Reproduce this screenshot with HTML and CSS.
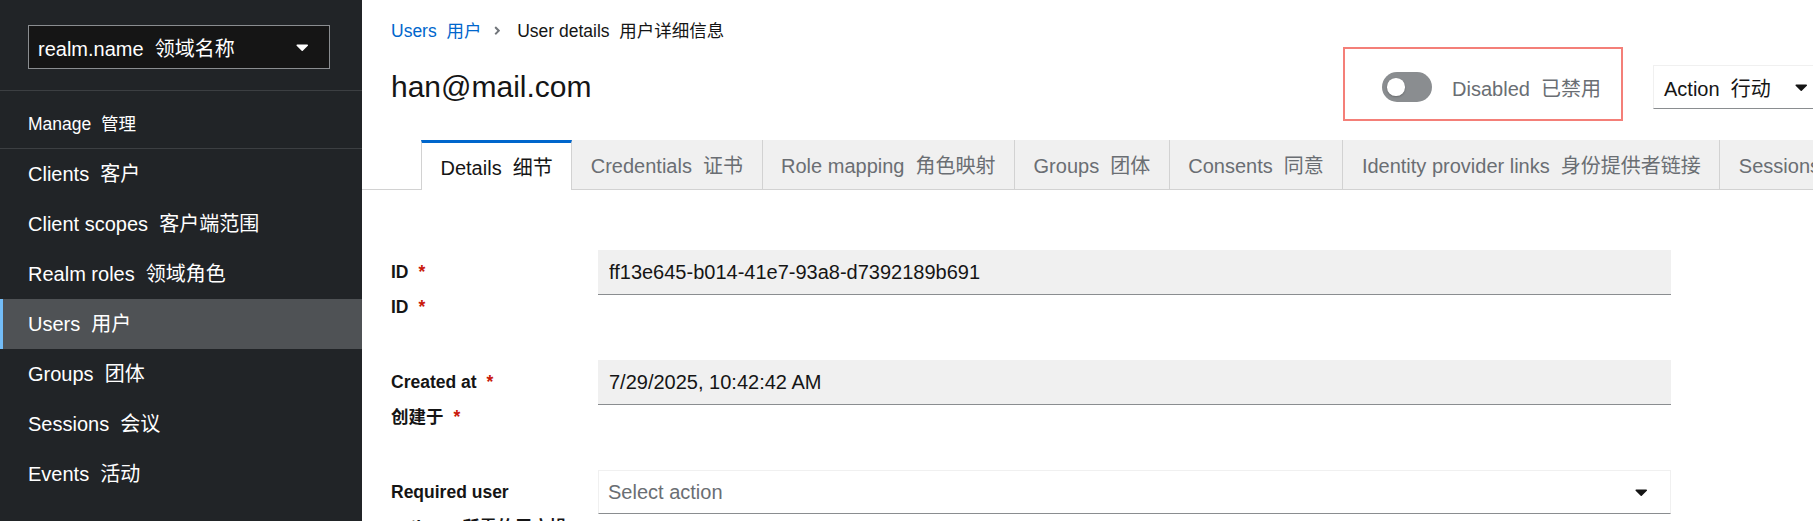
FILE: index.html
```html
<!DOCTYPE html>
<html lang="en">
<head>
<meta charset="utf-8">
<title>han@mail.com</title>
<link rel="stylesheet" href="styles.css">
</head>
<body>
<div class="page">
  <aside class="sidebar">
    <div class="realm-wrap">
      <div class="realm-select">
        <span>realm.name&nbsp; 领域名称</span>
        <svg class="caret" viewBox="0 0 320 512"><path d="M31.3 192h257.3c17.8 0 26.7 21.5 14.1 34.1L174.1 354.8c-7.8 7.8-20.5 7.8-28.3 0L17.2 226.1C4.6 213.5 13.5 192 31.3 192z"/></svg>
      </div>
    </div>
    <div class="nav-title">Manage&nbsp; 管理</div>
    <nav class="nav-list">
      <a class="nav-item">Clients&nbsp; 客户</a>
      <a class="nav-item">Client scopes&nbsp; 客户端范围</a>
      <a class="nav-item">Realm roles&nbsp; 领域角色</a>
      <a class="nav-item active">Users&nbsp; 用户</a>
      <a class="nav-item">Groups&nbsp; 团体</a>
      <a class="nav-item">Sessions&nbsp; 会议</a>
      <a class="nav-item">Events&nbsp; 活动</a>
    </nav>
  </aside>

  <main class="main">
    <header class="page-header">
      <nav class="breadcrumb">
        <a class="bc-link">Users&nbsp; 用户</a>
        <svg class="bc-divider" viewBox="0 0 256 512"><path d="M224.3 273l-136 136c-9.4 9.4-24.6 9.4-33.9 0l-22.6-22.6c-9.4-9.4-9.4-24.6 0-33.9l96.4-96.4-96.4-96.4c-9.4-9.4-9.4-24.6 0-33.9L54.3 103c9.4-9.4 24.6-9.4 33.9 0l136 136c9.5 9.4 9.5 24.6.1 34z"/></svg>
        <span class="bc-current">User details&nbsp; 用户详细信息</span>
      </nav>
      <div class="title-row">
        <h1 class="title">han@mail.com</h1>
        <div class="controls">
          <label class="switch">
            <span class="switch-track"></span>
            <span class="switch-label">Disabled&nbsp; 已禁用</span>
          </label>
          <div class="dropdown">
            <span>Action&nbsp; 行动</span>
            <svg class="caret" viewBox="0 0 320 512"><path d="M31.3 192h257.3c17.8 0 26.7 21.5 14.1 34.1L174.1 354.8c-7.8 7.8-20.5 7.8-28.3 0L17.2 226.1C4.6 213.5 13.5 192 31.3 192z"/></svg>
          </div>
        </div>
      </div>
    </header>

    <div class="tabs">
      <div class="tab active">Details&nbsp; 细节</div>
      <div class="tab">Credentials&nbsp; 证书</div>
      <div class="tab">Role mapping&nbsp; 角色映射</div>
      <div class="tab">Groups&nbsp; 团体</div>
      <div class="tab">Consents&nbsp; 同意</div>
      <div class="tab">Identity provider links&nbsp; 身份提供者链接</div>
      <div class="tab">Sessions&nbsp; 会议</div>
    </div>

    <section class="form-section">
      <form class="form">
        <div class="form-label">
          <span class="label-line">ID <span class="req">*</span></span>
          <span class="label-line">ID <span class="req">*</span></span>
        </div>
        <div class="form-control">
          <input class="text-input" readonly value="ff13e645-b014-41e7-93a8-d7392189b691">
        </div>

        <div class="form-label">
          <span class="label-line">Created at <span class="req">*</span></span>
          <span class="label-line">创建于 <span class="req">*</span></span>
        </div>
        <div class="form-control">
          <input class="text-input" readonly value="7/29/2025, 10:42:42 AM">
        </div>

        <div class="form-label">
          <span class="label-line">Required user actions&nbsp; 所需的用户操作</span>
        </div>
        <div class="form-control">
          <div class="select-toggle">
            <span>Select action</span>
            <svg class="caret dark" viewBox="0 0 320 512"><path d="M31.3 192h257.3c17.8 0 26.7 21.5 14.1 34.1L174.1 354.8c-7.8 7.8-20.5 7.8-28.3 0L17.2 226.1C4.6 213.5 13.5 192 31.3 192z"/></svg>
          </div>
        </div>
      </form>
    </section>
  </main>
</div>
</body>
</html>
```

FILE: styles.css
```css
html, body {
  margin: 0;
  padding: 0;
}

body {
  font-family: "Liberation Sans", "Noto Sans CJK SC", sans-serif;
  color: #151515;
  background: #fff;
  overflow: hidden;
}

.page {
  display: flex;
  width: 1848px;
  height: 521px;
}

/* Sidebar */
.sidebar {
  flex: none;
  width: 362px;
  background: #212427;
  color: #fff;
}

.realm-wrap {
  padding: 25px 0 21px 28px;
  border-bottom: 1px solid #3c3f42;
}

.realm-select {
  box-sizing: border-box;
  width: 302px;
  height: 44px;
  background: #151515;
  border: 1px solid #8a8d90;
  display: flex;
  align-items: center;
  justify-content: space-between;
  padding: 0 21px 0 9px;
  font-size: 20px;
  color: #fff;
}

.caret {
  width: 12.5px;
  height: 20px;
  fill: currentColor;
  flex: none;
}

.caret.dark {
  fill: #151515;
}

.nav-title {
  padding: 20px 0 11px 28px;
  font-size: 17.5px;
  line-height: 26px;
  border-bottom: 1px solid #3c3f42;
  color: #fff;
}

.nav-list {
  display: flex;
  flex-direction: column;
}

.nav-item {
  position: relative;
  display: block;
  height: 50px;
  line-height: 50px;
  padding-left: 28px;
  font-size: 20px;
  color: #fff;
  text-decoration: none;
  white-space: nowrap;
}

.nav-item.active {
  background: #4f5255;
}

.nav-item.active::before {
  content: "";
  position: absolute;
  left: 0;
  top: 0;
  bottom: 0;
  width: 3px;
  background: #73bcf7;
}

/* Main */
.main {
  flex: none;
  width: 1486px;
  background: #fff;
}

.page-header {
  padding: 18px 30px 0 29px;
}

.breadcrumb {
  display: flex;
  align-items: center;
  height: 26px;
  font-size: 17.5px;
  line-height: 26px;
  white-space: nowrap;
}

.bc-link {
  color: #0066cc;
  text-decoration: none;
}

.bc-divider {
  width: 6.7px;
  height: 13.3px;
  fill: #72767b;
  margin: 0 16px 0 13px;
}

.bc-current {
  color: #151515;
}

.title-row {
  display: flex;
  align-items: center;
  justify-content: space-between;
  height: 44px;
  margin-top: 21px;
}

.title {
  margin: 0;
  font-size: 30px;
  font-weight: normal;
  line-height: 36px;
  color: #151515;
}

.controls {
  display: flex;
  align-items: center;
}

.switch {
  position: relative;
  display: flex;
  align-items: center;
  gap: 20px;
  margin-right: 52px;
}

.switch::after {
  content: "";
  position: absolute;
  top: -25px;
  bottom: -19px;
  left: -39px;
  right: -22px;
  border: 2px solid #f47f78;
  pointer-events: none;
}

.switch-track {
  position: relative;
  width: 50px;
  height: 30px;
  border-radius: 15px;
  background: #8a8d90;
  flex: none;
}

.switch-track::before {
  content: "";
  position: absolute;
  left: 5px;
  top: 6.25px;
  width: 17.5px;
  height: 17.5px;
  border-radius: 50%;
  background: #fff;
  box-shadow: 0 1px 2px rgba(0, 0, 0, 0.25);
}

.switch-label {
  font-size: 20px;
  color: #6a6e73;
  white-space: nowrap;
}

.dropdown {
  box-sizing: border-box;
  width: 165px;
  height: 44px;
  display: flex;
  align-items: center;
  justify-content: space-between;
  padding: 0 10px;
  border: 1px solid #f0f0f0;
  border-bottom-color: #8a8d90;
  font-size: 20px;
  color: #151515;
  white-space: nowrap;
}

.dropdown .caret {
  fill: #151515;
}

/* Tabs */
.tabs {
  display: flex;
  align-items: flex-start;
  height: 49px;
  margin-top: 31px;
  padding-left: 59px;
  border-bottom: 1px solid #d2d2d2;
}

.tab {
  box-sizing: border-box;
  flex: none;
  height: 49px;
  display: flex;
  align-items: center;
  padding: 0 18.5px;
  background: #f0f0f0;
  color: #6a6e73;
  font-size: 20px;
  white-space: nowrap;
  border-right: 1px solid #d2d2d2;
}

.tab.active {
  height: 50px;
  background: #fff;
  color: #151515;
  border-top: 3px solid #0066cc;
  border-left: 1px solid #d2d2d2;
  padding-bottom: 1px;
}

/* Form */
.form-section {
  padding: 60px 0 0 29px;
}

.form {
  display: grid;
  grid-template-columns: 187px 1073px;
  column-gap: 20px;
  row-gap: 35px;
  align-items: start;
}

.form-label {
  padding: 5px 9px 0 0;
  font-size: 17.5px;
  font-weight: bold;
  line-height: 35px;
  color: #151515;
}

.label-line {
  display: block;
}

.req {
  color: #c9190b;
  margin-left: 5px;
}

.text-input {
  box-sizing: border-box;
  display: block;
  width: 100%;
  height: 45px;
  margin: 0;
  border: 0;
  border-bottom: 1px solid #8a8d90;
  background: #f0f0f0;
  padding: 0 11px;
  font-family: "Liberation Sans", "Noto Sans CJK SC", sans-serif;
  font-size: 20px;
  color: #151515;
  outline: none;
}

.select-toggle {
  box-sizing: border-box;
  height: 44px;
  display: flex;
  align-items: center;
  justify-content: space-between;
  padding: 0 23px 0 9px;
  border: 1px solid #f0f0f0;
  border-bottom-color: #8a8d90;
  background: #fff;
  font-size: 20px;
  color: #6a6e73;
}
```
